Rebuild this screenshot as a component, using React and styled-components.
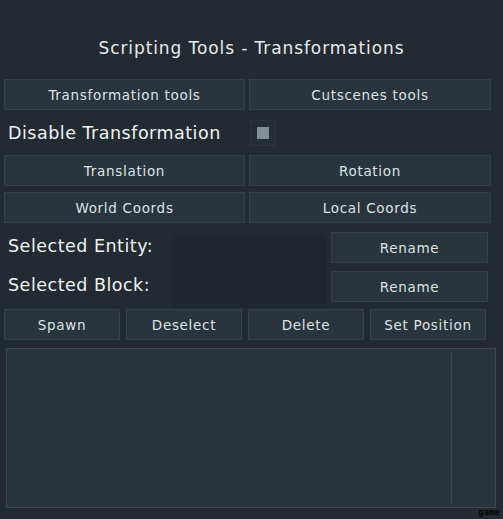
import React, { useState } from 'react';
import styled, { createGlobalStyle } from 'styled-components';

const GlobalStyle = createGlobalStyle`
  html, body {
    margin: 0;
    padding: 0;
    background: #232a31;
  }
  body {
    font-family: 'DejaVu Sans', 'Liberation Sans', sans-serif;
    color: #dfe4e7;
  }
`;

const Panel = styled.div`
  width: 503px;
  height: 519px;
  box-sizing: border-box;
  padding: 38px 0 0 4px;
  background: #232a31;
  position: relative;
  overflow: hidden;
`;

const Title = styled.h1`
  margin: 0 0 18px 0;
  height: 23px;
  text-align: center;
  font-size: 17px;
  font-weight: normal;
  letter-spacing: 0.9px;
  color: #e6eaec;
  padding-right: 4px;
`;

const Row = styled.div`
  display: grid;
  grid-template-columns: ${(p) => p.cols || '241px 242px'};
  gap: ${(p) => p.gap || 4}px;
  margin-bottom: ${(p) => p.mb || 0}px;
`;

const Button = styled.button`
  height: ${(p) => p.h || 31}px;
  margin: 0;
  padding: 0;
  border: 1px solid #34414b;
  background: #29343c;
  color: #dde3e6;
  font-family: inherit;
  font-size: 13.5px;
  letter-spacing: 0.7px;
  cursor: pointer;
`;

const CheckRow = styled.div`
  display: flex;
  align-items: center;
  height: 27px;
  margin: 9px 0 9px 0;
`;

const Label = styled.span`
  width: 242px;
  padding-left: 4px;
  font-size: 17.5px;
  letter-spacing: 0.5px;
  color: #f0f3f4;
`;

const CheckBox = styled.div`
  width: 26px;
  height: 26px;
  box-sizing: border-box;
  border: 1px solid #2b343c;
  background: #252d34;
  display: flex;
  align-items: center;
  justify-content: center;
`;

const CheckInner = styled.div`
  width: 12px;
  height: 12px;
  background: #868e9a;
`;

const Selected = styled.div`
  display: grid;
  grid-template-columns: 164px 155px 157px;
  column-gap: 4px;
  margin-top: 8px;
  height: 78px;
`;

const Labels = styled.div`
  display: flex;
  flex-direction: column;
  padding: 3px 0 0 4px;
  gap: 14px;
`;

const SelLabel = styled.div`
  height: 25px;
  line-height: 25px;
  font-size: 17.5px;
  letter-spacing: 0.5px;
  color: #f0f3f4;
  white-space: nowrap;
`;

const NameBox = styled.div`
  margin-top: 3px;
  background: #1f262d;
  border: 1px solid #222a30;
`;

const Renames = styled.div`
  display: flex;
  flex-direction: column;
  gap: 8px;
  padding-top: 1px;
`;

const Output = styled.div`
  margin: 8px 0 0 2px;
  width: 490px;
  height: 160px;
  box-sizing: border-box;
  border: 1px solid #3a4751;
  background: #29353d;
  display: flex;
  justify-content: flex-end;
`;

const ScrollTrack = styled.div`
  width: 43px;
  margin: 3px 0;
  border-left: 1px solid #3a4751;
  background: #28333b;
`;

const Tag = styled.span`
  position: absolute;
  right: 3px;
  bottom: 2px;
  font-family: 'DejaVu Sans Mono', monospace;
  font-size: 9px;
  font-weight: bold;
  color: #050505;
`;

export default function App() {
  const [disabled, setDisabled] = useState(false);

  return (
    <>
      <GlobalStyle />
      <Panel>
        <Title>Scripting Tools - Transformations</Title>
        <Row>
          <Button>Transformation tools</Button>
          <Button>Cutscenes tools</Button>
        </Row>
        <CheckRow>
          <Label>Disable Transformation</Label>
          <CheckBox onClick={() => setDisabled(!disabled)}>
            <CheckInner />
          </CheckBox>
        </CheckRow>
        <Row mb={6}>
          <Button>Translation</Button>
          <Button>Rotation</Button>
        </Row>
        <Row>
          <Button>World Coords</Button>
          <Button>Local Coords</Button>
        </Row>
        <Selected>
          <Labels>
            <SelLabel>Selected Entity:</SelLabel>
            <SelLabel>Selected Block:</SelLabel>
          </Labels>
          <NameBox />
          <Renames>
            <Button>Rename</Button>
            <Button>Rename</Button>
          </Renames>
        </Selected>
        <Row cols="116px 116px 116px 116px" gap={6}>
          <Button>Spawn</Button>
          <Button>Deselect</Button>
          <Button>Delete</Button>
          <Button>Set Position</Button>
        </Row>
        <Output>
          <ScrollTrack />
        </Output>
        <Tag>game</Tag>
      </Panel>
    </>
  );
}
